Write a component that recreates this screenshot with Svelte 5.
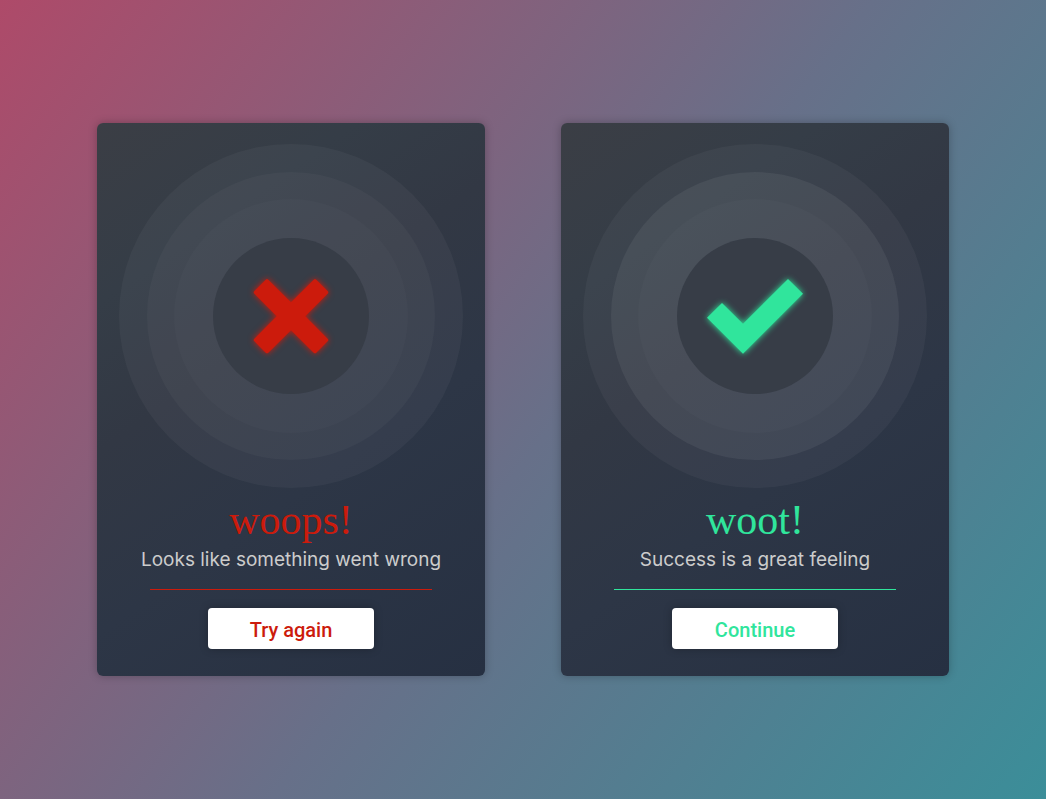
<script>
    const cards = [
        {
            kind: 'error',
            title: 'woops!',
            message: 'Looks like something went wrong',
            action: 'Try again',
            label: 'Error'
        },
        {
            kind: 'success',
            title: 'woot!',
            message: 'Success is a great feeling',
            action: 'Continue',
            label: 'Success'
        }
    ];
</script>

<main>
    {#each cards as card}
        <section class="card {card.kind}">
            <div class="ring outer">
                <div class="ring middle">
                    <div class="ring inner">
                        <div class="disc">
                            <svg viewBox="0 0 468 468" role="img" aria-label={card.label}>
                                {#if card.kind === 'error'}
                                    <path d="M158 125Q162 121 166 125L234 193L302 125Q306 121 310 125L344 159Q348 163 344 167L277 235L344 302Q348 306 344 310L310 344Q306 348 302 344L234 277L166 344Q162 348 158 344L124 310Q120 306 124 302L191 235L124 167Q120 163 124 159Z" />
                                {:else}
                                    <path d="M90 239L135 195L198 257L333 123L378 167L198 347Z" />
                                {/if}
                            </svg>
                        </div>
                    </div>
                </div>
            </div>
            <h2>{card.title}</h2>
            <p>{card.message}</p>
            <hr />
            <button type="button">{card.action}</button>
        </section>
    {/each}
</main>

<style>
    :global(body) {
        margin: 0;
    }

    main {
        min-height: 100vh;
        box-sizing: border-box;
        padding: 24px;
        display: grid;
        grid-template-columns: repeat(auto-fit, minmax(344px, 388px));
        justify-content: center;
        align-content: center;
        gap: 76px;
        background: linear-gradient(127deg, #ae4a69 0%, #677089 53%, #3b8e99 100%);
    }

    .card {
        box-sizing: border-box;
        padding: 21px 21px 27px;
        display: flex;
        flex-direction: column;
        align-items: center;
        border-radius: 6px;
        background: linear-gradient(145deg, #3b3e45 0%, #353d47 22%, #323844 40%, #2d3646 62%, #263042 100%);
        box-shadow: 0 0 8px rgba(0, 0, 0, 0.25);
    }

    .error {
        --accent: #cc1b0c;
        --middle: rgba(255, 255, 255, 0.03);
    }

    .success {
        --accent: #30e59c;
        --middle: rgba(255, 255, 255, 0.06);
    }

    .ring,
    .disc {
        display: grid;
        place-items: center;
        flex: none;
        border-radius: 50%;
    }

    .outer {
        width: 344px;
        height: 344px;
        background: rgba(255, 255, 255, 0.04);
    }

    .middle {
        width: 288px;
        height: 288px;
        background: var(--middle);
    }

    .inner {
        width: 234px;
        height: 234px;
        background: rgba(255, 255, 255, 0.02);
    }

    .disc {
        width: 156px;
        height: 156px;
        background: #373d47;
    }

    svg {
        width: 156px;
        height: 156px;
        fill: var(--accent);
        filter: drop-shadow(0 0 3px var(--accent));
    }

    h2 {
        margin: 8px 0 0;
        color: var(--accent);
        font: 400 42px/48px "Liberation Serif", serif;
    }

    p {
        margin: 4px 0 17px;
        color: #ccc;
        font: 400 19px/24px Inter, sans-serif;
        white-space: nowrap;
    }

    hr {
        width: 282px;
        height: 1px;
        margin: 0 0 18px;
        border: 0;
        background: var(--accent);
    }

    button {
        width: 166px;
        height: 41px;
        padding: 2px 0 0;
        border: 0;
        border-radius: 4px;
        background: #fff;
        color: var(--accent);
        font: 500 20px/24px Roboto, sans-serif;
        box-shadow: 0 0 8px rgba(0, 0, 0, 0.25);
        cursor: pointer;
    }
</style>
